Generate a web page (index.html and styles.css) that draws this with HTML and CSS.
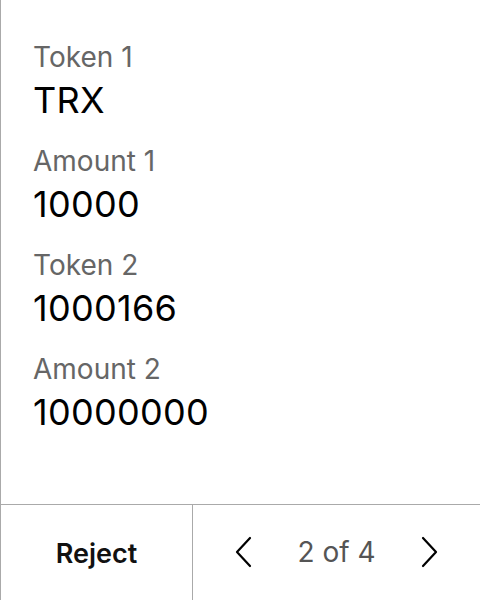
FILE: index.html
```html
<!DOCTYPE html>
<html>
<head>
<meta charset="utf-8">
<link rel="stylesheet" href="styles.css">
</head>
<body>
<div class="screen">
  <div class="content">
    <div class="field"><div class="label">Token 1</div><div class="value">TRX</div></div>
    <div class="field"><div class="label">Amount 1</div><div class="value">10000</div></div>
    <div class="field"><div class="label">Token 2</div><div class="value">1000166</div></div>
    <div class="field"><div class="label">Amount 2</div><div class="value">10000000</div></div>
  </div>
  <div class="footer">
    <div class="reject">Reject</div>
    <div class="pager">
      <svg class="chev" width="18" height="32" viewBox="0 0 18 32"><path d="M16 2 L3 16 L16 30" fill="none" stroke="#000" stroke-width="2.2" stroke-linecap="round" stroke-linejoin="round"/></svg>
      <span class="count">2 of 4</span>
      <svg class="chev" width="18" height="32" viewBox="0 0 18 32"><path d="M2 2 L15 16 L2 30" fill="none" stroke="#000" stroke-width="2.2" stroke-linecap="round" stroke-linejoin="round"/></svg>
    </div>
  </div>
</div>
</body>
</html>
```
FILE: styles.css
```css
html, body { margin: 0; padding: 0; background: #fff; }
body { font-family: Inter, "Noto Sans", sans-serif; }
.screen {
  width: 480px; height: 600px; box-sizing: border-box;
  border-left: 1px solid #aaa;
  display: flex; flex-direction: column;
}
.content {
  flex: 1;
  padding: 39px 0 0 32px;
  display: flex; flex-direction: column; gap: 21px;
}
.field { display: flex; flex-direction: column; gap: 3px; }
.label { font-size: 28px; line-height: 36px; color: #666; }
.value { font-size: 36px; line-height: 44px; color: #000; letter-spacing: 0.3px; }
.footer {
  height: 96px; box-sizing: border-box;
  border-top: 1px solid #aaa;
  display: flex;
}
.reject {
  width: 191px;
  display: flex; align-items: center; justify-content: center;
  font-size: 27px; font-weight: 600; color: #111;
  padding-top: 1px;
}
.pager {
  flex: 1; border-left: 1px solid #aaa;
  display: flex; align-items: center; justify-content: center; gap: 45px;
  padding-bottom: 2px;
}
.count { font-size: 28px; color: #555; }
.chev { display: block; }
```
